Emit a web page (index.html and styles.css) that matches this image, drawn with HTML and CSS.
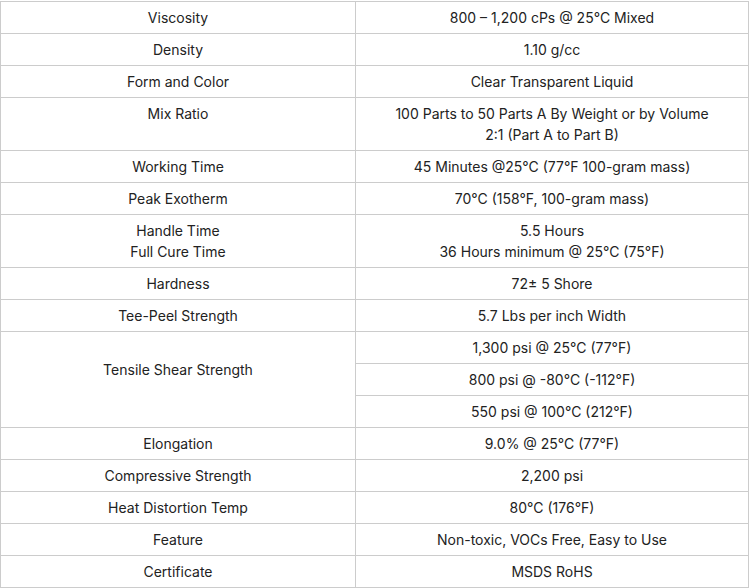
FILE: index.html
```html
<!DOCTYPE html>
<html lang="en">
<head>
<meta charset="utf-8">
<link rel="stylesheet" href="styles.css">
</head>
<body>
<table class="spec">
<colgroup><col class="c1"><col class="c2"></colgroup>
<tbody>
<tr><td>Viscosity</td><td>800 – 1,200 cPs @ 25°C Mixed</td></tr>
<tr><td>Density</td><td>1.10 g/cc</td></tr>
<tr><td>Form and Color</td><td>Clear Transparent Liquid</td></tr>
<tr><td class="top">Mix Ratio</td><td>100 Parts to 50 Parts A By Weight or by Volume<br>2:1 (Part A to Part B)</td></tr>
<tr><td>Working Time</td><td>45 Minutes @25°C (77°F 100-gram mass)</td></tr>
<tr><td>Peak Exotherm</td><td>70°C (158°F, 100-gram mass)</td></tr>
<tr><td>Handle Time<br>Full Cure Time</td><td>5.5 Hours<br>36 Hours minimum @ 25°C (75°F)</td></tr>
<tr><td>Hardness</td><td>72± 5 Shore</td></tr>
<tr><td>Tee-Peel Strength</td><td>5.7 Lbs per inch Width</td></tr>
<tr><td rowspan="3" class="raised">Tensile Shear Strength</td><td>1,300 psi @ 25°C (77°F)</td></tr>
<tr><td>800 psi @ -80°C (-112°F)</td></tr>
<tr><td>550 psi @ 100°C (212°F)</td></tr>
<tr><td>Elongation</td><td>9.0% @ 25°C (77°F)</td></tr>
<tr><td>Compressive Strength</td><td>2,200 psi</td></tr>
<tr><td>Heat Distortion Temp</td><td>80°C (176°F)</td></tr>
<tr><td>Feature</td><td>Non-toxic, VOCs Free, Easy to Use</td></tr>
<tr><td>Certificate</td><td>MSDS RoHS</td></tr>
</tbody>
</table>
</body>
</html>
```
FILE: styles.css
```css
html, body {
  margin: 0;
  padding: 0;
  background: #fff;
}
body {
  padding-top: 1px;
  font-family: Inter, "Liberation Sans", sans-serif;
  font-size: 14px;
  color: #222;
}
.spec {
  border-collapse: collapse;
  table-layout: fixed;
  width: 749px;
}
.c1 { width: 355px; }
.spec td {
  border: 1px solid #ccc;
  padding: 5px 8px;
  line-height: 21px;
  text-align: center;
  vertical-align: middle;
}
.spec td.top {
  vertical-align: top;
}
.spec td.raised {
  padding-bottom: 26px;
}
```
